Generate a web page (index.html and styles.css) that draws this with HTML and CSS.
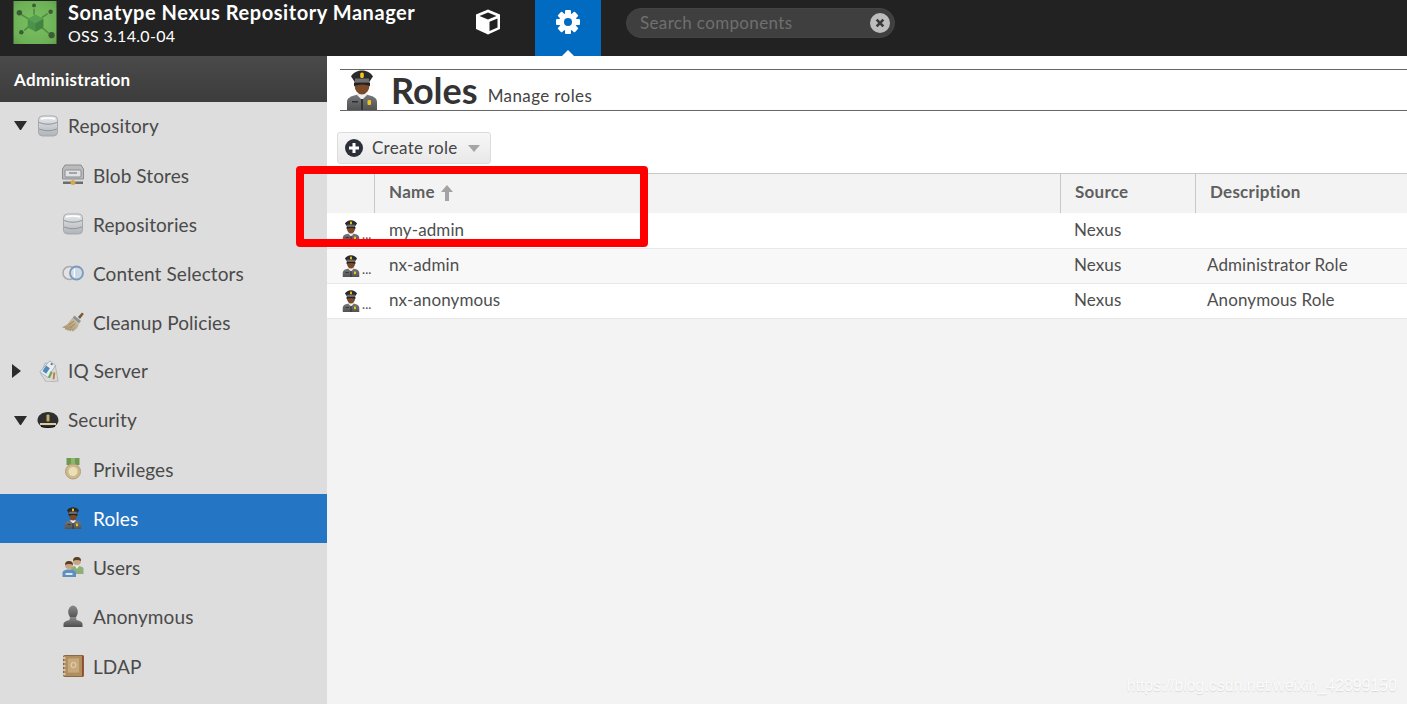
FILE: index.html
```html
<!DOCTYPE html>
<html lang="en">
<head>
<meta charset="utf-8">
<title>Roles - Nexus Repository Manager</title>
<link rel="stylesheet" href="styles.css">
</head>
<body>
<svg class="defs" width="0" height="0" aria-hidden="true">
  <defs>
    <linearGradient id="db" x1="0" y1="0" x2="0" y2="1"><stop offset="0" stop-color="#e8eaec"/><stop offset="1" stop-color="#aeb3b8"/></linearGradient>
    <linearGradient id="uni" x1="0" y1="0" x2="0" y2="1"><stop offset="0" stop-color="#7a7c7e"/><stop offset="1" stop-color="#505254"/></linearGradient>
    <linearGradient id="bristle" x1="1" y1="0" x2="0" y2="1"><stop offset="0" stop-color="#d3c4a4"/><stop offset="1" stop-color="#a08c68"/></linearGradient>
    <linearGradient id="anonFill" x1="0" y1="0" x2="0" y2="1"><stop offset="0" stop-color="#8a8a8a"/><stop offset="1" stop-color="#4f4f4f"/></linearGradient>
    <radialGradient id="logoBg" cx=".5" cy=".5" r=".75"><stop offset="0" stop-color="#7cbf63"/><stop offset=".7" stop-color="#6db156"/><stop offset="1" stop-color="#5c9a48"/></radialGradient>
    <symbol id="officer" viewBox="0 0 32 40">
      <path d="M1 40v-8c0-4 4-6 9-7l6-2 6 2c5 1 9 3 9 7v8z" fill="url(#uni)"/>
      <path d="M11 25l5 5 5-5-2-3h-6z" fill="#eee"/>
      <path d="M15 29h2v11h-2z" fill="#333"/>
      <ellipse cx="16" cy="15" rx="7.500" ry="9.500" fill="#7a4a28"/>
      <path d="M8 12.500h16v3.500q-8-3-16 0z" fill="#222"/>
      <path d="M5 6.500C7 3 11 0.500 16 0.500S25 3 27 6.500C25 9 24 11 23 12.500H9C8 11 7 9 5 6.500z" fill="#2b2b2b"/>
      <path d="M9 8.500h14v4H9z" fill="#6d6f70"/>
      <rect x="14.200" y="2.500" width="3.600" height="5.500" rx="1.500" fill="#f2c41d"/>
      <rect x="21.500" y="30" width="3.500" height="5" rx="1" fill="#f2c41d"/>
      <rect x="6" y="31" width="6" height="1.500" fill="#2f2f2f"/>
    </symbol>
    <symbol id="database" viewBox="0 0 20 22">
      <rect x="0.500" y="1" width="19" height="20" rx="4" fill="url(#db)" stroke="#a5a9ad"/>
      <path d="M1 7.500q9 3.500 18 0M1 14q9 3.500 18 0" fill="none" stroke="#8f9499" stroke-width="1"/>
      <path d="M3 4q7-2 14 0" fill="none" stroke="#fff" stroke-width="1.500"/>
    </symbol>
    <symbol id="blob" viewBox="0 0 22 22">
      <path d="M3 1h16l2.500 4v10H.5V5z" fill="#b9bbbd" stroke="#8b8d8f"/>
      <rect x="3" y="6" width="16" height="7" rx="1" fill="#e1e2e3" stroke="#8b8d8f"/>
      <rect x="7" y="8" width="8" height="2" fill="#a2a4a6"/>
      <rect x="1" y="17.500" width="20" height="2.500" fill="#6c6c6c"/>
      <circle cx="11" cy="18.500" r="2.500" fill="#d5a94c"/>
    </symbol>
    <symbol id="selector" viewBox="0 0 22 16">
      <circle cx="7.500" cy="8" r="6.500" fill="#e3e3e3" stroke="#a9a9a9" stroke-width="1.500"/>
      <circle cx="14.500" cy="8" r="6.500" fill="#c8d8e8" fill-opacity=".8" stroke="#7d9ab8" stroke-width="1.800"/>
      <path d="M12.500 3.500v9" stroke="#fff" stroke-width="1.500"/>
    </symbol>
    <symbol id="broom" viewBox="0 0 22 20">
      <path d="M16 5l4-4.500 1.800 1.500-3.800 5z" fill="#7b5a33"/>
      <path d="M12.500 3.500l6.500 5.500-2 2.500-6.500-5.500z" fill="#8e949c"/>
      <path d="M10.500 6l6.500 5.500c-.5 3.500-3 6.500-6.500 8l-1-1.500-1 1.500-1.500-1.500-1 1-1-1.500-1.500.5L3 16l-3-.5C2 14 4 13.500 5 12.500 7 10.500 8.500 8 10.500 6z" fill="url(#bristle)"/>
      <path d="M7 13l5-4M8 16l5-4.500" stroke="#8b7855" stroke-width=".7"/>
    </symbol>
    <symbol id="tag" viewBox="0 0 22 24">
      <path d="M8 3l11 3 3 17-13 1-6-9z" fill="#d9d9d9" stroke="#a9a9a9" stroke-width=".8"/>
      <path d="M13 1l6 5-8 13-9-6z" fill="#e9eef2" stroke="#9aa5ae" stroke-width=".8"/>
      <path d="M9 6l4 3-4 6-4-3z" fill="#4d8bb8"/>
      <path d="M14 12l2 2-3 6-2-1z" fill="#6fa55a"/>
      <path d="M17 13l2 1-1 7h-2z" fill="#b9803e"/>
      <circle cx="15" cy="4.500" r="1.200" fill="#777"/>
    </symbol>
    <symbol id="cap" viewBox="0 0 22 17">
      <path d="M.5 9C.5 4 5 .5 11 .5S21.500 4 21.500 9c0 3-3 5-3.500 6-4 1.500-10 1.500-14 0-.5-1-3.500-3-3.500-6z" fill="#2f2f2f"/>
      <path d="M3 11.500h16v2H3z" fill="#d9cf9e"/>
      <rect x="9.500" y="3" width="3" height="7" rx="1" fill="#bfae68"/>
      <path d="M4 14q7 3 14 0v1.500q-7 2-14 0z" fill="#111"/>
    </symbol>
    <symbol id="medal" viewBox="0 0 16 22">
      <rect x="1.500" y="0" width="13" height="7" fill="#6e9a4f"/>
      <path d="M6 0h4v7H6z" fill="#8db56d"/>
      <circle cx="8" cy="13.500" r="7.500" fill="#cdb98a" stroke="#b29f70"/>
      <circle cx="8" cy="13.500" r="4.500" fill="#eadfb9"/>
    </symbol>
    <symbol id="users" viewBox="0 0 22 22">
      <circle cx="15" cy="5" r="4" fill="#c9a583"/>
      <path d="M11 5a4 4 0 0 1 8 0q-4-2-8 0z" fill="#5a3f28"/>
      <path d="M9 16v-3c0-2 2-3 6-3s6.500 1 6.500 3v5H12z" fill="#8daf78"/>
      <path d="M13 10l2 3 2-3z" fill="#eee"/>
      <circle cx="7" cy="9" r="4" fill="#c9a583"/>
      <path d="M3 9a4 4 0 0 1 8 0q-4-2-8 0z" fill="#5a3f28"/>
      <path d="M.5 21v-4c0-2 2.500-3.500 6.500-3.500s7 1.500 7 3.500v4z" fill="#5d8fc0"/>
      <path d="M3.500 17h7v2h-7z" fill="#dfe8f2"/>
    </symbol>
    <symbol id="anon" viewBox="0 0 20 22">
      <ellipse cx="10" cy="7" rx="4.800" ry="6.500" fill="url(#anonFill)"/>
      <path d="M7 12h6l.5 3c4 1 6 2 6 4v3H.5v-3c0-2 2-3 6-4z" fill="url(#anonFill)"/>
    </symbol>
    <symbol id="ldap" viewBox="0 0 22 22">
      <rect x="1.500" y="0.500" width="20" height="21" rx="1" fill="#b38d5e" stroke="#8a6a42"/>
      <rect x="20" y="0.500" width="1.500" height="21" fill="#8f4a33"/>
      <rect x="5.500" y="3" width="12" height="15" fill="#c8a97c" stroke="#a58a60" stroke-width=".6"/>
      <circle cx="11.500" cy="10" r="2.500" fill="none" stroke="#e7d8bb"/>
      <path d="M0 3h3.500M0 7h3.500M0 11h3.500M0 15h3.500M0 19h3.500" stroke="#ddd" stroke-width="1.500"/>
    </symbol>
  </defs>
</svg>

<div class="app">
  <header class="topbar">
    <div class="brand">
      <svg class="logo" viewBox="0 0 44 44" aria-hidden="true">
        <rect width="44" height="44" fill="url(#logoBg)"/>
        <path d="M21 8v6M8 14l7 4M35 13l-6 4M11 30l5-4M36 33l-7-6" stroke="#4f8a3f" stroke-width="1.500"/>
        <circle cx="21" cy="4.500" r="2" fill="#3c5c38"/>
        <circle cx="6" cy="12" r="2.800" fill="#3c5c38"/>
        <circle cx="38" cy="11" r="2.300" fill="#3c5c38"/>
        <circle cx="8" cy="32" r="2.300" fill="#3c5c38"/>
        <circle cx="39" cy="35" r="3.200" fill="#3c5c38"/>
        <path d="M22.500 14l8 4.500v8.500l-8 4.500-8-4.500v-8.500z" fill="#4c924a"/>
        <path d="M22.500 14l8 4.500-8 4.500-8-4.500z" fill="#57a052"/>
        <path d="M22.500 23l8-4.500v8.500l-8 4.500z" fill="#418341"/>
      </svg>
      <div class="brand-text">
        <div class="brand-name">Sonatype Nexus Repository Manager</div>
        <div class="brand-version">OSS 3.14.0-04</div>
      </div>
    </div>
    <nav class="mode-nav">
      <a class="mode">
        <svg class="mode-icon" viewBox="0 0 26 26" aria-hidden="true">
          <path d="M13 .5l12 5v14.500l-12 5.500L1 20V5.500z" fill="#fff"/>
          <path d="M13 3.500L21.500 7 13 10.500 4.500 7z" fill="#222"/>
          <path d="M14.500 12.800l8-3.400v9.100l-8 3.600z" fill="#222"/>
        </svg>
      </a>
      <a class="mode mode-active">
        <svg class="mode-icon" viewBox="0 0 26 26" aria-hidden="true">
          <g fill="#fff">
            <rect x="10" y="1" width="6" height="24" rx="1"/>
            <rect x="10" y="1" width="6" height="24" rx="1" transform="rotate(45 13 13)"/>
            <rect x="10" y="1" width="6" height="24" rx="1" transform="rotate(90 13 13)"/>
            <rect x="10" y="1" width="6" height="24" rx="1" transform="rotate(135 13 13)"/>
            <circle cx="13" cy="13" r="9"/>
          </g>
          <circle cx="13" cy="13" r="4" fill="#016bc1"/>
        </svg>
      </a>
    </nav>
    <div class="search">
      <span class="search-text">Search components</span>
      <span class="search-clear">
        <svg viewBox="0 0 18 18" aria-hidden="true">
          <circle cx="9" cy="9" r="9" fill="#bdbdbd"/>
          <path d="M6 6l6 6M12 6l-6 6" stroke="#3a3a3a" stroke-width="2.400"/>
        </svg>
      </span>
    </div>
  </header>

  <div class="body">
    <aside class="sidebar">
      <div class="sidebar-title">Administration</div>
      <ul class="tree">
        <li class="tree-row"><span class="arrow arrow-down"></span><svg class="ti"><use href="#database"/></svg><span>Repository</span></li>
        <li class="tree-row tree-sub"><svg class="ti"><use href="#blob"/></svg><span>Blob Stores</span></li>
        <li class="tree-row tree-sub"><svg class="ti"><use href="#database"/></svg><span>Repositories</span></li>
        <li class="tree-row tree-sub"><svg class="ti"><use href="#selector"/></svg><span>Content Selectors</span></li>
        <li class="tree-row tree-sub"><svg class="ti"><use href="#broom"/></svg><span>Cleanup Policies</span></li>
        <li class="tree-row"><span class="arrow arrow-right"></span><svg class="ti"><use href="#tag"/></svg><span>IQ Server</span></li>
        <li class="tree-row"><span class="arrow arrow-down"></span><svg class="ti"><use href="#cap"/></svg><span>Security</span></li>
        <li class="tree-row tree-sub"><svg class="ti"><use href="#medal"/></svg><span>Privileges</span></li>
        <li class="tree-row tree-sub tree-selected"><svg class="ti"><use href="#officer"/></svg><span>Roles</span></li>
        <li class="tree-row tree-sub"><svg class="ti"><use href="#users"/></svg><span>Users</span></li>
        <li class="tree-row tree-sub"><svg class="ti"><use href="#anon"/></svg><span>Anonymous</span></li>
        <li class="tree-row tree-sub"><svg class="ti"><use href="#ldap"/></svg><span>LDAP</span></li>
      </ul>
    </aside>

    <main class="main">
      <div class="page-head">
        <svg class="page-icon"><use href="#officer"/></svg>
        <h1 class="page-title">Roles</h1>
        <span class="page-sub">Manage roles</span>
      </div>
      <div class="toolbar">
        <button class="btn" type="button">
          <svg class="btn-icon" viewBox="0 0 18 18" aria-hidden="true">
            <circle cx="9" cy="9" r="9" fill="#2b3038"/>
            <path d="M9 4v10M4 9h10" stroke="#fff" stroke-width="3"/>
          </svg>
          <span>Create role</span>
          <span class="btn-caret"></span>
        </button>
      </div>
      <div class="grid">
        <div class="grid-row grid-head">
          <div class="cell"></div>
          <div class="cell cell-sep">Name
            <svg class="sort" viewBox="0 0 14 16" aria-hidden="true"><path d="M7 0l6 7H9v9H5V7H1z" fill="#a3a3a3"/></svg>
          </div>
          <div class="cell cell-sep">Source</div>
          <div class="cell cell-sep">Description</div>
        </div>
        <div class="grid-row grid-data grid-first">
          <div class="cell cell-icon"><svg class="row-icon"><use href="#officer"/></svg><span class="dots">...</span></div>
          <div class="cell cell-name">my-admin</div>
          <div class="cell">Nexus</div>
          <div class="cell cell-desc"></div>
        </div>
        <div class="grid-row grid-data grid-alt">
          <div class="cell cell-icon"><svg class="row-icon"><use href="#officer"/></svg><span class="dots">...</span></div>
          <div class="cell cell-name">nx-admin</div>
          <div class="cell">Nexus</div>
          <div class="cell cell-desc">Administrator Role</div>
        </div>
        <div class="grid-row grid-data">
          <div class="cell cell-icon"><svg class="row-icon"><use href="#officer"/></svg><span class="dots">...</span></div>
          <div class="cell cell-name">nx-anonymous</div>
          <div class="cell">Nexus</div>
          <div class="cell cell-desc">Anonymous Role</div>
        </div>
      </div>
    </main>
  </div>
  <div class="highlight"></div>
  <div class="watermark">https://blog.csdn.net/weixin_42899150</div>
</div>
</body>
</html>
```
FILE: styles.css
```css
* { box-sizing: border-box; }
html, body { margin: 0; padding: 0; height: 100%; }
body { font-family: Lato, "Open Sans", sans-serif; color: #444; background: #fff; overflow: hidden; }
.defs { position: absolute; }
.app { position: relative; width: 1407px; height: 704px; display: flex; flex-direction: column; overflow: hidden; }

.topbar { flex: 0 0 56px; height: 56px; background: #222; display: flex; align-items: stretch; color: #fff; }
.brand { width: 455px; display: flex; align-items: flex-start; padding: 1px 0 0 13px; gap: 11px; }
.logo { width: 44px; height: 43px; display: block; }
.brand-name { font-size: 20px; font-weight: 700; line-height: 22px; letter-spacing: .55px; white-space: nowrap; }
.brand-version { font-size: 16px; line-height: 20px; margin-top: 3px; letter-spacing: .3px; white-space: nowrap; }
.mode-nav { display: flex; gap: 14px; }
.mode { width: 66px; height: 56px; display: flex; justify-content: center; position: relative; padding-top: 9px; }
.mode-icon { width: 26px; height: 26px; display: block; }
.mode-active { background: #016bc1; }
.mode-active::after { content: ""; position: absolute; left: 50%; bottom: 0; margin-left: -6px; border: 6px solid transparent; border-top: 0; border-bottom-color: #fff; }
.search { margin: 8px 0 0 25px; width: 269px; height: 30px; background: #3f3f3f; border: 1px solid #444; border-radius: 15px; display: flex; align-items: center; justify-content: space-between; padding: 0 4px 2px 13px; }
.search-text { color: #6f6f6f; font-size: 17px; letter-spacing: .35px; }
.search-clear { width: 20px; height: 20px; display: block; margin-top: 2px; }
.search-clear svg { width: 20px; height: 20px; display: block; }

.body { flex: 1; display: flex; min-height: 0; }
.sidebar { width: 327px; background: #ddd; flex: none; }
.sidebar-title { height: 46px; background: linear-gradient(#4a4a4a, #3c3c3c); color: #fff; font-weight: 700; font-size: 17px; letter-spacing: .3px; line-height: 48px; padding-left: 14px; }
.tree { list-style: none; margin: -1px 0 0; padding: 0; }
.tree-row { height: 49.1px; display: flex; align-items: center; font-size: 19px; letter-spacing: .1px; color: #4a4a4a; padding-left: 14px; }
.tree-row span:last-child { margin-left: 9px; margin-bottom: 1px; }
.tree-sub { padding-left: 62px; }
.tree-sub span:last-child { margin-bottom: 0; padding-top: 1px; }
.tree-selected { background: #2475c4; color: #fff; }
.ti { width: 22px; height: 22px; flex: none; }
.arrow { width: 0; height: 0; margin-right: 10px; flex: none; border-style: solid; border-color: transparent; }
.arrow-down { width: 13px; height: 9px; border-width: 9px 6.500px 0; border-top-color: #2c2c2c; }
.arrow-right { width: 9px; height: 14px; border-width: 7px 0 7px 9px; border-left-color: #2c2c2c; margin-left: -2px; margin-right: 16px; }

.main { flex: 1; min-width: 0; background: #f3f3f3; display: flex; flex-direction: column; }
.page-head { background: #fff; padding-top: 13px; display: flex; align-items: center; position: relative; border-left: 13px solid #fff; height: 55px; }
.page-head::before { content: ""; position: absolute; left: 0; right: 0; top: 13px; bottom: 0; border-top: 1px solid #666; border-bottom: 1px solid #666; pointer-events: none; }
.page-icon { width: 32px; height: 40px; margin-left: 6px; flex: none; }
.page-title { margin: 0 0 0 13px; font-size: 36px; font-weight: 700; color: #333; line-height: 40px; }
.page-sub { margin: 10px 0 0 10px; font-size: 17px; letter-spacing: .4px; color: #444; }
.toolbar { background: #fff; padding: 21px 0 9px 10px; display: flex; }
.btn { height: 32px; width: 154px; background: linear-gradient(#f7f7f7, #e8e8e8); border: 1px solid #dcdcdc; border-radius: 3px; display: flex; align-items: center; font: inherit; font-size: 17px; letter-spacing: .3px; color: #444; padding: 0 0 2px 7px; }
.btn-icon { width: 18px; height: 18px; margin: 2px 9px 0 0; }
.btn-caret { margin: 2px 0 0 10px; border-style: solid; border-color: transparent; border-width: 7px 6px 0; border-top-color: #a5a5a5; width: 0; height: 0; }

.grid { display: flex; flex-direction: column; }
.grid-row { display: grid; grid-template-columns: 47px 686px 135px 1fr; font-size: 17px; align-items: stretch; }
.grid-head { height: 40px; background: #f3f3f3; border-top: 1px solid #c8c8c8; font-weight: 700; color: #5f5f5f; letter-spacing: .25px; }
.grid-head .cell { display: flex; align-items: center; padding: 0 0 4px 14px; gap: 5px; }
.cell-sep { border-left: 1px solid #c8c8c8; }
.sort { width: 14px; height: 16px; margin-top: 2px; }
.grid-data { height: 35px; background: #fff; border-bottom: 1px solid #e8e8e8; color: #4e4e4e; letter-spacing: .1px; }
.grid-first { height: 36px; }
.grid-data .cell { display: flex; align-items: center; padding: 0 0 3px 14px; }
.grid-first .cell { padding-bottom: 2px; }
.grid-data .cell-name { padding-left: 15px; }
.grid-data .cell-desc { padding-left: 12px; }
.grid-data .cell-icon { padding: 0 0 0 15px; }
.grid-alt { background: #f8f8f8; }
.row-icon { width: 18px; height: 22px; flex: none; }
.dots { font-size: 13px; margin-left: 2px; align-self: flex-end; padding-bottom: 6px; }

.highlight { position: absolute; left: 296px; top: 166px; width: 352px; height: 81px; border: 8px solid #f00; border-radius: 4px; pointer-events: none; }
.watermark { position: absolute; right: 10px; top: 677px; font-family: "Liberation Sans", sans-serif; font-size: 15.900px; color: #fbfbfb; text-shadow: 0 1px 1px #d8d8d8; }
```
